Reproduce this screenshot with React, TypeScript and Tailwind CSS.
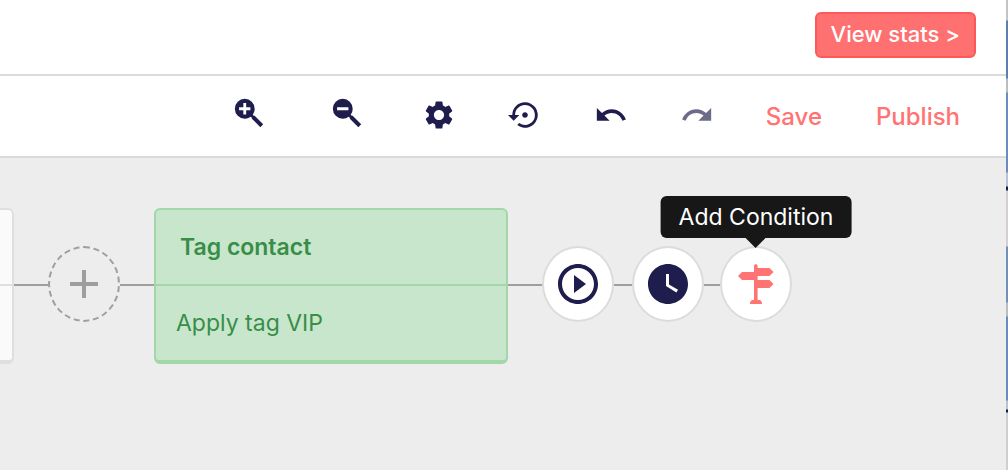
import React, { useState } from 'react';
import {
  MdPlayCircleOutline,
  MdRedo,
  MdSettings,
  MdSettingsBackupRestore,
  MdUndo,
  MdWatchLater,
} from 'react-icons/md';

const MAGNIFIER =
  'M9 2a7 7 0 0 1 7 7c0 1.57-.5 3-1.39 4.19l.8.81H16l6 6-2 2-6-6v-.59l-.81-.8A6.9 6.9 0 0 1 9 16 7 7 0 1 1 9 2';

function ZoomIcon({ kind }: { kind: 'in' | 'out' }) {
  const sign = kind === 'in' ? 'M8 5v3H5v2h3v3h2v-3h3V8h-3V5z' : 'M5 8v2h8V8z';
  return (
    <svg viewBox="0 0 24 24" className="size-[34px]" fill="currentColor" fillRule="evenodd" aria-hidden="true">
      <path d={MAGNIFIER + 'z' + sign} />
    </svg>
  );
}

function SignpostIcon() {
  return (
    <svg viewBox="0 0 36 40" className="h-10 w-9" fill="currentColor" aria-hidden="true">
      <path d="M16 1.5Q17.8-1.5 19.6 1.5V4H31.5L35.5 8 31.5 12H19.6V16H31.5L35.5 20 31.5 24H19.6V36H21.5Q24 36.5 24 40H12Q12 36.5 14.5 36H16V16H4L0 12 4 8H16Z" />
    </svg>
  );
}

function ToolButton({ label, className = '', disabled, children }: {
  label: string;
  className?: string;
  disabled?: boolean;
  children: React.ReactNode;
}) {
  return (
    <button type="button" aria-label={label} disabled={disabled} className={`shrink-0 text-[#1e1d4d] ${className}`}>
      {children}
    </button>
  );
}

function TextButton({ className = '', children }: { className?: string; children: React.ReactNode }) {
  return (
    <button type="button" className={`shrink-0 pt-1 text-2xl font-medium text-[#ff7373] ${className}`}>
      {children}
    </button>
  );
}

function Wire({ className }: { className: string }) {
  return <div className={`mb-[2px] h-[2px] shrink-0 bg-[#9e9e9e] ${className}`} />;
}

function ActionNode({ label, tooltip, children }: {
  label: string;
  tooltip?: boolean;
  children: React.ReactNode;
}) {
  return (
    <div className="relative mb-1 shrink-0">
      <button
        type="button"
        aria-label={label}
        className="flex h-[76px] w-[72px] items-center justify-center rounded-[50%] border-2 border-[#dcdcdc] bg-white text-[#1e1d4d]"
      >
        {children}
      </button>
      {tooltip && (
        <div role="tooltip" className="absolute bottom-full left-1/2 mb-2 -translate-x-1/2 rounded-md bg-[#171717] px-[18px] py-1 text-[23px] leading-[34px] whitespace-nowrap text-white">
          {label}
          <svg viewBox="0 0 20 10" className="absolute top-full left-1/2 h-[10px] w-5 -translate-x-1/2" fill="#171717" aria-hidden="true">
            <path d="M0 0H20L10 10Z" />
          </svg>
        </div>
      )}
    </div>
  );
}

export default function App() {
  const [hovered] = useState('condition');

  return (
    <div className="flex min-h-screen overflow-hidden bg-[#ededed] font-['Inter','Liberation_Sans',sans-serif]">
      <div className="flex min-w-0 flex-1 flex-col">
        <header className="flex justify-end border-b-2 border-[#dadada] bg-white px-[30px] pt-3 pb-4">
          <button
            type="button"
            className="rounded-md border-2 border-[#ff5858] bg-[#ff7070] px-[14px] pt-[3px] pb-[5px] text-[22px] leading-[34px] font-medium text-white"
          >
            View stats &gt;
          </button>
        </header>

        <nav className="flex h-[82px] items-center justify-end gap-[52px] border-b-2 border-[#dadada] bg-white px-11 pb-[2px]">
          <ToolButton label="Zoom in" className="px-[6px] pb-1"><ZoomIcon kind="in" /></ToolButton>
          <ToolButton label="Zoom out" className="px-[6px] pb-1"><ZoomIcon kind="out" /></ToolButton>
          <ToolButton label="Settings"><MdSettings size={34} /></ToolButton>
          <ToolButton label="Restore"><MdSettingsBackupRestore size={34} /></ToolButton>
          <ToolButton label="Undo"><MdUndo size={34} /></ToolButton>
          <ToolButton label="Redo" disabled className="opacity-65"><MdRedo size={34} /></ToolButton>
          <TextButton>Save</TextButton>
          <TextButton className="min-w-[88px]">Publish</TextButton>
        </nav>

        <main className="flex flex-1 items-start pt-[50px]">
          <div className="flex items-center">
            <div className="w-[14px] shrink-0 rounded-r-md border-t-2 border-r-2 border-b-4 border-[#dfdfdf] bg-[#fafafa]">
              <div className="h-[76px] border-b-2 border-[#dfdfdf]" />
              <div className="h-[74px]" />
            </div>
            <Wire className="w-[34px]" />
            <button
              type="button"
              aria-label="Add step"
              className="mb-1 flex h-[76px] w-[72px] shrink-0 items-center justify-center rounded-[50%] border-2 border-dashed border-[#9e9e9e] text-[#9e9e9e]"
            >
              <svg viewBox="0 0 28 28" className="size-7" fill="currentColor" aria-hidden="true">
                <path d="M12 0h4v12h12v4H16v12h-4V16H0v-4h12z" />
              </svg>
            </button>
            <Wire className="w-[34px]" />
            <article className="w-[354px] shrink-0 rounded-md border-2 border-b-4 border-[#a3d6a8] bg-[#c8e6cc] text-[#388e48]">
              <h2 className="flex h-[76px] items-center border-b-2 border-[#a3d6a8] px-6 text-[23px] font-semibold">Tag contact</h2>
              <p className="flex h-[74px] items-center px-5 text-[23px]">Apply tag VIP</p>
            </article>
            <Wire className="w-[34px]" />
            <ActionNode label="Add Action"><MdPlayCircleOutline size={48} /></ActionNode>
            <Wire className="w-[18px]" />
            <ActionNode label="Add Delay"><MdWatchLater size={48} /></ActionNode>
            <Wire className="w-4" />
            <ActionNode label="Add Condition" tooltip={hovered === 'condition'}>
              <span className="text-[#ff7373]"><SignpostIcon /></span>
            </ActionNode>
          </div>
        </main>
      </div>

      {/* sliver of the window behind */}
      <div className="w-[2px] shrink-0 bg-[linear-gradient(#c4c4c4_0_20px,#5f80ab_21px_78px,#bdbdbd_79px_92px,#6c8db8_93px_172px,#b8c3d2_173px_186px,#17204a_187px_190px,#d5cfd0_191px_246px,#7390b5_247px_302px,#bdbdbd_303px_316px,#6c8db8_317px_400px,#b8c3d2_401px_409px,#17204a_410px_412px,#cfcfcf_413px)]" />
    </div>
  );
}
